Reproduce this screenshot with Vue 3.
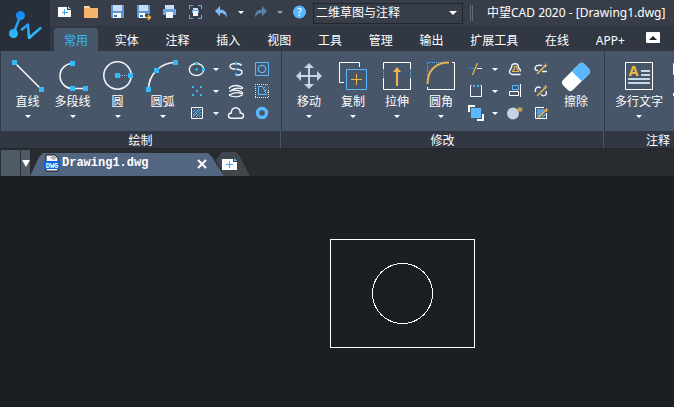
<script setup>
import { ref } from 'vue'

const menus = ['常用', '实体', '注释', '插入', '视图', '工具', '管理', '输出', '扩展工具', '在线', 'APP+']
const activeMenu = ref('常用')
const workspace = ref('二维草图与注释')

const quick = [
  { name: '新建', icon: '<path d="M2 4h9v3h4v7H2z" fill="#fff"/><path d="M12 3l3 3h-3z" fill="#7cc4ff"/><path d="M8.500 6v6M5.500 9h6" stroke="#41a5ee" shape-rendering="crispEdges"/>' },
  { name: '打开', icon: '<path d="M2 3h5l1 2h8v10H2z" fill="#f5b46b"/><path d="M2 3h5l1 1v1H2z" fill="#ffd9a0"/>' },
  { name: '保存', icon: '<path d="M3 2h13v13H4l-1-1z" fill="#5b97d6"/><path d="M5 2h9v6H5z" fill="#c9dcf4"/><path d="M5 10h8v5H5z" fill="#fff"/><path d="M6 12h3v2H6z" fill="#3f6ea5"/>' },
  { name: '另存为', icon: '<path d="M3 2h13v9h-6v4H4l-1-1z" fill="#5b97d6"/><path d="M5 2h9v6H5z" fill="#c9dcf4"/><path d="M5 10h6v5H5z" fill="#fff"/><path d="M6 12h3v2H6z" fill="#3f6ea5"/><path d="M11 14.500h5M14 12l2.500 2.500L14 17" fill="none" stroke="#f2b95b" stroke-width="1.300"/>' },
  { name: '打印', icon: '<path d="M5 2h9v4H5z" fill="#c9dcf4"/><path d="M3 6h13v6H3z" fill="#6ba4dd"/><path d="M6 9h7v6H6z" fill="#f1f7ff"/>' },
  { name: '打印预览', icon: '<path d="M3.500 6V2.500H7M12 2.500h3.500V6M15.500 12v3.500H12M7 15.500H3.500V12" fill="none" stroke="#69afe8"/><path d="M7 5h5v3H7z" fill="#c9dcf4"/><path d="M6 7h7v3H6z" fill="#6ba4dd"/><path d="M7 8h5v5H7z" fill="#f1f7ff"/>' },
  { name: '撤销', icon: '<path d="M8 3v3.500c5 0 7 3 7 8-1.500-3-3.500-4.500-7-4.500v3.500L3 8z" fill="#78b8f5"/>' },
  { name: '撤销列表', drop: true },
  { name: '重做', icon: '<path d="M11 3v3.500c-5 0-7 3-7 8 1.500-3 3.500-4.500 7-4.500v3.500L16 8z" fill="#5c81a8"/>' },
  { name: '重做列表', drop: true, off: true },
  { name: '帮助', icon: '<circle cx="9.500" cy="9" r="6.500" fill="#5ab6fb"/><text x="9.500" y="13" text-anchor="middle" font-size="11" fill="#fff">?</text>' },
]

const drawBig = [
  { name: '直线', icon: '<path d="M5.500 4.500l27 27" stroke="#f3f5f8" stroke-width="1.600"/><path d="M3 2h5v5H3zM30 29h5v5h-5z" fill="#35b9fb"/>' },
  { name: '多段线', icon: '<path d="M18.500 5.500a12.500 12.500 0 0 0 0 25h13" fill="none" stroke="#eef1f5" stroke-width="1.600"/><path d="M16 3h5v5h-5zM16 28h5v5h-5zM29 28h5v5h-5z" fill="#35b9fb"/>' },
  { name: '圆', icon: '<circle cx="18.500" cy="17.500" r="13.700" fill="none" stroke="#eef1f5" stroke-width="1.600"/><path d="M21 17.500h8" stroke="#8eb4dc" stroke-dasharray="1 1"/><path d="M16 15h5v5h-5zM29 15h5v5h-5z" fill="#35b9fb"/>' },
  { name: '圆弧', icon: '<path d="M4.500 31.500c0-15 12-27 27-27" fill="none" stroke="#eef1f5" stroke-width="1.600"/><path d="M29 2h5v5h-5zM10 10h5v5h-5zM2 29h5v5H2z" fill="#35b9fb"/>' },
]

const drawSmall = [
  { name: '椭圆', icon: '<ellipse cx="8.500" cy="9.500" rx="7.200" ry="6" fill="none" stroke="#f3f5f8" stroke-width="1.400"/><path d="M7 2h3v3H7zM14 8h3v3h-3z" fill="#35b9fb"/><path d="M8.500 8v3M7 9.500h3" stroke="#35b9fb"/>' },
  { name: '椭圆列表', drop: true },
  { name: '样条曲线', icon: '<path d="M14.500 5.500C13.500 4 12 3.500 9 3.500c-4 0-6 1-6 2.800C3 8.500 5.500 9.300 9 9.300s6 .8 6 3c0 2-2 3-6 3" fill="none" stroke="#f3f5f8" stroke-width="1.500"/><path d="M8 2h2v3H8zM8 8h2v2H8zM8 13h2v3H8z" fill="#35b9fb"/>' },
  { name: '面域', icon: '<path d="M2.500 2.500h13v13h-13z" fill="none" stroke="#5bb8ff"/><circle cx="9" cy="9" r="3.700" fill="none" stroke="#5bb8ff" stroke-width="1.300"/>' },
  { name: '点', icon: '<path d="M4 4h2v2H4zM12 4h2v2h-2zM8 8h2v2H8zM4 12h2v2H4zM12 12h2v2h-2z" fill="#35b9fb"/>' },
  { name: '点列表', drop: true },
  { name: '螺旋', icon: '<path d="M2.500 5.500Q9 1.500 15.500 5.500V7M2.500 5v2M15 7Q9 4.500 2.500 9.500M2.500 9.500Q9 6.500 15.500 10.500v2M2.500 12v1.500Q9 16.500 15.500 13M3 13Q9 9 15 12" fill="none" stroke="#f3f5f8" stroke-width="1.300"/>' },
  { name: '边界', icon: '<path d="M2.500 2v14M2 2.500h14M2 15.500h14M15.500 8v8" stroke="#d5e5f6" stroke-dasharray="1 1" fill="none"/><path d="M5.500 12.500v-8h4l4 8z" fill="none" stroke="#5bb8ff"/><path d="M11 6l4-4M12 9l4-4M14 11l2-2" stroke="#b9cde4" stroke-dasharray="1 1"/>' },
  { name: '图案填充', icon: '<path d="M3.500 3.500h11v11h-11z" fill="none" stroke="#fff"/><path d="M5 8l3-3M5 11l6-6M5 13l8-8M8 13l5-5M11 13l2-2" stroke="#5bb8ff"/>' },
  { name: '图案填充列表', drop: true },
  { name: '修订云线', icon: '<path d="M4.500 14.300c-4 0-4-5-.2-5.300C4 2 13.500 2 13.300 9c4.500 0 4 5.300.2 5.300z" fill="none" stroke="#f3f5f8" stroke-width="1.500"/>' },
  { name: '圆环', icon: '<circle cx="9" cy="9" r="4.500" fill="none" stroke="#5bb8ff" stroke-width="3.400"/>' },
]

const editBig = [
  { name: '移动', icon: '<path d="M18 5l5 5h-4v7h7v-4l5 5-5 5v-4h-7v7h4l-5 5-5-5h4v-7h-7v4l-5-5 5-5v4h7v-7h-4z" fill="#c3d6ec"/>' },
  { name: '复制', icon: '<path d="M24.500 9V4.500h-20v20H9" fill="none" stroke="#fff"/><path d="M11.500 11.500h20v20h-20z" fill="none" stroke="#5bb8ff"/><path d="M21.500 16v11M16 21.500h11" stroke="#f0b64e"/>' },
  { name: '拉伸', icon: '<path d="M4.500 11V4.500h27V11M4.500 20v11.500h27V20" fill="none" stroke="#fff"/><path d="M4.500 12v8M31.500 12v8" stroke="#5bb8ff" stroke-dasharray="1 1"/><path d="M17 28V14h-3l4-5 4 5h-3v14z" fill="#f0b64e"/>' },
  { name: '圆角', icon: '<path d="M29 4.500h2.500v27h-27V29" fill="none" stroke="#fff"/><path d="M4.500 18V4.500H18" fill="none" stroke="#5bb8ff" stroke-dasharray="1 1"/><path d="M4.500 26C4.500 12 13 4.500 26 4.500" fill="none" stroke="#e6b455" stroke-width="2"/>' },
]

const editSmall = [
  { name: '修剪', icon: '<path d="M3 8.500h4" stroke="#5bb8ff" stroke-dasharray="1 1"/><path d="M10 8.500h5" stroke="#fff"/><path d="M10.500 3l-5 12" stroke="#e6b455" stroke-width="1.300"/>' },
  { name: '修剪列表', drop: true },
  { name: '偏移', icon: '<path d="M14.500 11.500c.5-3-2-3-2-4 0-5-7-5-7 0 0 1.500-2.500 2-2 4.500.3 2 2 2.500 4 2.500h7" fill="none" stroke="#f3f5f8" stroke-width="1.400"/><path d="M6 11.500h7M6.500 11l2-2V6.500h2.500V9l2 2" fill="none" stroke="#e6b455" stroke-width="1.200"/>' },
  { name: '合并', icon: '<path d="M10 5.500C6 4.500 3 6 3 8.500c0 1.500 1 2 3 2M10 11.500h5" fill="none" stroke="#f3f5f8" stroke-width="1.400"/><path d="M5 14l8-8" stroke="#e6b455" stroke-width="1.700"/><path d="M13.500 3.500v4M11.500 5.500h4" stroke="#e6b455"/>' },
  { name: '打断', icon: '<path d="M4.500 3.500h-1v11h11v-11h-1" fill="none" stroke="#f3f5f8"/><path d="M6 3h2v2H6zM10 3h2v2h-2z" fill="#35b9fb"/>' },
  { name: '打断列表', drop: true },
  { name: '对齐', icon: '<path d="M14.500 2v13" stroke="#fff"/><path d="M6.500 3.500h6v4h-6z" fill="none" stroke="#5bb8ff"/><path d="M3.500 9.500h9v4h-9z" fill="none" stroke="#fff"/>' },
  { name: '编辑样条', icon: '<path d="M3.500 10C2.500 6 6 3.500 8.500 6M9 12c2 3.500 6.500 1.500 5-3" fill="none" stroke="#f3f5f8" stroke-width="1.400"/><path d="M5 14l8-8" stroke="#e6b455" stroke-width="1.700"/><path d="M13.500 3v4M11.500 5h4" stroke="#e6b455"/>' },
  { name: '绘图次序', icon: '<path d="M1 1h7v2H3v5H1zM17 17h-7v-2h5v-5h2z" fill="#fff"/><path d="M4 4h10v10H4z" fill="#5bb8ff"/>' },
  { name: '绘图次序列表', drop: true },
  { name: '分解', icon: '<circle cx="7" cy="9.500" r="6" fill="#c8d3e2"/><path d="M14 3v5M11.500 5.500h5M12 3.500l4 4M16 3.500l-4 4" stroke="#f0b64e"/>' },
  { name: '编辑填充', icon: '<path d="M12 3.500H3.500v11h11V9" fill="none" stroke="#fff"/><path d="M5 7l2-2M5 9.500L9.500 5M5 12l7-7M6 13.500l6-6M10 13.500l3.500-3.500" stroke="#5bb8ff" stroke-width="1.200"/><path d="M6 14l8-8" stroke="#e6b455" stroke-width="1.700"/><path d="M14.500 4v4M12.500 6h4" stroke="#e6b455"/>' },
]
</script>

<template>
  <div class="app">
    <header class="top">
      <button class="logo" aria-label="应用程序菜单">
        <svg width="50" height="51" viewBox="0 0 50 51">
          <defs>
            <linearGradient id="brand" gradientUnits="userSpaceOnUse" x1="0" y1="12" x2="0" y2="38">
              <stop offset="0" stop-color="#1383f5" />
              <stop offset="1" stop-color="#31c1ff" />
            </linearGradient>
          </defs>
          <path d="M20.500 15.500l-7 18" stroke="url(#brand)" stroke-width="2.500" />
          <circle cx="20.500" cy="15.500" r="4.500" fill="url(#brand)" />
          <circle cx="13.500" cy="33.500" r="4.500" fill="url(#brand)" />
          <path d="M22 29.500l6-5 1 13.500 11.500-10" fill="none" stroke="url(#brand)" stroke-width="2.500" stroke-linejoin="round" stroke-linecap="round" />
        </svg>
      </button>
      <div class="bars">
        <div class="titlebar">
          <div class="quick">
            <template v-for="q in quick" :key="q.name">
              <button v-if="q.drop" class="thin" :class="{ off: q.off }" :aria-label="q.name"><i class="caret"></i></button>
              <button v-else :aria-label="q.name"><svg width="18" height="18" viewBox="0 0 18 18" v-html="q.icon"></svg></button>
            </template>
          </div>
          <div class="workspace">
            <select v-model="workspace" aria-label="工作空间">
              <option>二维草图与注释</option>
            </select>
          </div>
          <span class="grip"></span>
          <h1>中望CAD 2020 - [Drawing1.dwg]</h1>
        </div>
        <div class="menubar">
          <nav>
            <button v-for="m in menus" :key="m" :class="{ active: m === activeMenu }" @click="activeMenu = m">{{ m }}</button>
          </nav>
          <button class="fold" aria-label="折叠功能区"><i></i></button>
        </div>
      </div>
    </header>

    <section class="ribbon">
      <div class="panel draw">
        <div class="tools">
          <button v-for="t in drawBig" :key="t.name" class="big">
            <svg width="37" height="36" viewBox="0 0 37 36" v-html="t.icon"></svg>
            <span>{{ t.name }}</span>
            <i class="caret"></i>
          </button>
          <div class="grid">
            <button v-for="t in drawSmall" :key="t.name" :aria-label="t.name">
              <i v-if="t.drop" class="caret"></i>
              <svg v-else width="18" height="18" viewBox="0 0 18 18" v-html="t.icon"></svg>
            </button>
          </div>
        </div>
        <footer>绘制</footer>
      </div>

      <div class="panel edit">
        <div class="tools">
          <button v-for="t in editBig" :key="t.name" class="big">
            <svg width="36" height="36" viewBox="0 0 36 36" v-html="t.icon"></svg>
            <span>{{ t.name }}</span>
            <i class="caret"></i>
          </button>
          <div class="grid">
            <button v-for="t in editSmall" :key="t.name" :aria-label="t.name">
              <i v-if="t.drop" class="caret"></i>
              <svg v-else width="18" height="18" viewBox="0 0 18 18" v-html="t.icon"></svg>
            </button>
          </div>
          <button class="big">
            <svg width="36" height="36" viewBox="0 0 36 36">
              <g transform="rotate(-45 18 19)">
                <rect x="3" y="12" width="30" height="14" rx="4" fill="#fff" />
                <path d="M19 12h10a4 4 0 0 1 4 4v6a4 4 0 0 1-4 4H19z" fill="#5bb8ff" />
              </g>
            </svg>
            <span>擦除</span>
          </button>
        </div>
        <footer>修改</footer>
      </div>

      <div class="panel note">
        <div class="tools">
          <button class="big">
            <svg width="36" height="36" viewBox="0 0 36 36">
              <path d="M4.500 4.500h27v27h-27z" fill="none" stroke="#fff" />
              <text x="12.500" y="18" text-anchor="middle" font-size="14" font-weight="bold" fill="#f0b93e">A</text>
              <path d="M20 13h9M20 17h9M7 21h22M7 25h22" stroke="#c8d6ea" stroke-width="2" />
            </svg>
            <span>多行文字</span>
            <i class="caret"></i>
          </button>
          <div class="column">
            <button aria-label="标注"><svg width="18" height="18" viewBox="0 0 18 18"><path d="M2.500 3.500h14v11h-14z" fill="none" stroke="#fff" /></svg></button>
            <button aria-label="引线"><svg width="18" height="18" viewBox="0 0 18 18"><path d="M2 11h3v3H2z" fill="#fff" /></svg></button>
          </div>
        </div>
        <footer>注释</footer>
      </div>
    </section>

    <div class="documents">
      <span class="handle"></span>
      <button class="list" aria-label="文档列表"><i></i></button>
      <div class="doc">
        <svg width="16" height="18" viewBox="0 0 16 18">
          <path d="M2 1h9l3 3v13H2z" fill="#f5f8fb" stroke="#15191f" />
          <path d="M6 4l4-3 3 3-3 2z" fill="#a9b2bb" />
          <path d="M0 7h16v8H0z" fill="#1264e0" />
          <text x="8" y="13.500" text-anchor="middle" font-size="7" fill="#fff">DWG</text>
        </svg>
        <span>Drawing1.dwg</span>
        <button aria-label="关闭"><svg width="10" height="10" viewBox="0 0 10 10"><path d="M1 1l8 8M9 1l-8 8" stroke="#fff" stroke-width="2" /></svg></button>
      </div>
      <button class="add" aria-label="新建图形">
        <svg width="16" height="12" viewBox="0 0 16 12"><path d="M0 1h11v3h4v8H0z" fill="#fff" /><path d="M12 0l3 3h-3z" fill="#5bb8ff" /><path d="M7.500 3v7M4 6.500h7" stroke="#41a5ee" /></svg>
      </button>
    </div>

    <main>
      <svg class="sheet" aria-label="绘图区">
        <g fill="none" stroke="#fff" shape-rendering="crispEdges">
          <rect x="330.500" y="63.500" width="144" height="108" />
          <circle cx="402.500" cy="117.500" r="30" />
        </g>
      </svg>
    </main>
  </div>
</template>

<style>
body {
  background: #1b1e23;
}
</style>

<style scoped>
.app {
  display: flex;
  flex-direction: column;
  min-height: 100vh;
  overflow: hidden;
  color: #fff;
  font: 12px/14px "Noto Sans", "Noto Sans CJK SC", sans-serif;
}
svg {
  display: block;
  flex: none;
}
button {
  display: flex;
  align-items: center;
  justify-content: center;
  padding: 0;
  border: 0;
  background: none;
  color: inherit;
  font: inherit;
  white-space: nowrap;
}
.caret {
  border: 3px solid transparent;
  border-top-color: #fff;
  border-bottom: 0;
}
.top {
  display: flex;
  background: #313843;
}
.logo {
  background: #282f3a;
}
.bars {
  flex: 1;
  min-width: 0;
}
.titlebar {
  display: flex;
  align-items: center;
  height: 26px;
  padding-left: 2px;
  background: #373e49;
}
.quick {
  display: flex;
  align-self: flex-start;
}
.quick button {
  width: 26px;
  height: 24px;
}
.quick .thin {
  width: 13px;
}
.quick .off {
  opacity: 0.5;
}
.workspace {
  position: relative;
  margin-left: 1px;
}
.workspace::after {
  content: "";
  position: absolute;
  top: 8px;
  right: 6px;
  border: 4px solid transparent;
  border-top-color: #fff;
  border-bottom: 0;
  pointer-events: none;
}
select {
  display: block;
  width: 150px;
  height: 21px;
  padding: 0 2px;
  appearance: none;
  border: 1px solid #22272e;
  border-radius: 0;
  background: #373e49;
  color: inherit;
  font: inherit;
}
.grip {
  width: 1px;
  height: 16px;
  margin: 0 14px 0 7px;
  border: 1px solid #646a73;
  border-width: 0 1px;
}
h1 {
  margin: 0;
  font: inherit;
  white-space: nowrap;
}
.menubar {
  display: flex;
  align-items: flex-end;
  height: 25px;
  padding: 0 14px 0 4px;
}
nav {
  display: flex;
  flex: 1;
  justify-content: space-between;
}
nav button {
  height: 23px;
  padding: 2px 10px 0;
  border-radius: 3px 3px 0 0;
}
nav .active {
  background: #475669;
  color: #35b9fb;
}
.fold {
  width: 14px;
  height: 11px;
  margin: 0 0 8px 11px;
  border-radius: 1px;
  background: #fff;
}
.fold i {
  border: 4px solid transparent;
  border-bottom-color: #222;
  border-top: 0;
}
.ribbon {
  display: flex;
  gap: 1px;
  padding-left: 1px;
  overflow: hidden;
  border-bottom: 1px solid #22262d;
  background: #313843;
}
.panel {
  flex: none;
  box-sizing: border-box;
  border-right: 1px solid #475669;
}
.draw {
  width: 280px;
}
.edit {
  width: 322px;
}
.note {
  flex: 1 0 107px;
}
.tools {
  display: flex;
  height: 80px;
  box-sizing: border-box;
  padding: 7px 4px 0;
  background: #475669;
}
.edit .tools {
  padding-left: 5px;
}
.note .tools {
  padding-left: 8px;
}
.panel footer {
  height: 17px;
  line-height: 20px;
  text-align: center;
}
.big {
  flex-direction: column;
  justify-content: flex-start;
  width: 45px;
}
.edit .big {
  width: 44px;
}
.note .big {
  width: 52px;
}
.big span {
  margin-top: 1px;
}
.big .caret {
  margin-top: 6px;
}
.grid {
  display: grid;
  grid-template-columns: 24px 14px 26px 26px;
  grid-auto-rows: 22px;
}
.edit .grid {
  margin-left: 1px;
}
.column button {
  width: 22px;
  height: 22px;
  margin-left: 4px;
}
.documents {
  display: flex;
  align-items: flex-end;
  height: 27px;
  background: #282b30;
}
.handle {
  width: 19px;
  height: 26px;
  margin: 0 1px;
  background: #4f5b64;
}
.list {
  width: 9px;
  height: 26px;
  background: #4f5b64;
}
.list i {
  border: 4px solid transparent;
  border-top: 7px solid #fff;
  border-bottom: 0;
}
.doc {
  display: flex;
  align-items: center;
  width: 194px;
  height: 23px;
  box-sizing: border-box;
  padding: 0 17px 4px 14px;
  clip-path: polygon(0 100%, 9px 4px, 13px 0, 178px 0, 182px 4px, 100% 100%);
  background: #536681;
  font: bold 12px/14px "Liberation Mono", monospace;
}
.doc span {
  flex: 1;
  margin-left: 2px;
}
.doc button {
  padding-top: 3px;
}
.add {
  width: 34px;
  height: 24px;
  margin-left: -8px;
  padding-right: 6px;
  clip-path: polygon(6px 0, 20px 0, 23px 3px, 100% 100%, 8px 100%, 0 8px);
  background: #41464d;
}
main {
  display: flex;
  flex: 1;
  min-height: 190px;
  background: #1b1e23;
}
.sheet {
  flex: 1;
  height: auto;
  overflow: visible;
}
</style>
